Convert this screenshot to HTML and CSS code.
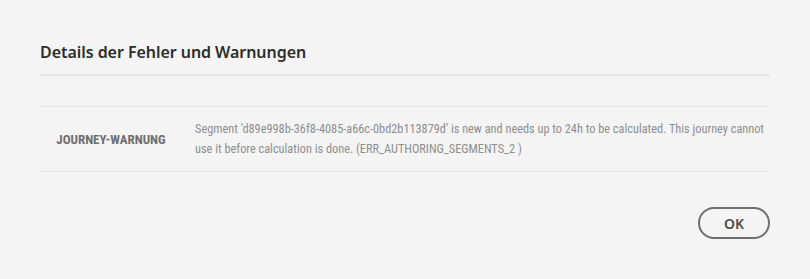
FILE: index.html
```html
<!DOCTYPE html>
<html>
<head>
    <title>Details der Fehler und Warnungen</title>
    <link rel="stylesheet" href="styles.css">
</head>
<body>

<div class="dialog">
    <h1>Details der Fehler und Warnungen</h1>

    <table class="issues">
        <thead>
            <tr><th></th><th></th></tr>
        </thead>
        <tbody>
            <tr>
                <td class="type">JOURNEY-WARNUNG</td>
                <td class="message">Segment 'd89e998b-36f8-4085-a66c-0bd2b113879d' is new and needs up to 24h to be calculated. This journey cannot use it before calculation is done. (ERR_AUTHORING_SEGMENTS_2 )</td>
            </tr>
        </tbody>
    </table>

    <div class="footer">
        <button class="btn">OK</button>
    </div>
</div>

</body>
</html>
```

FILE: styles.css
```css
body, html {
    margin: 0;
    padding: 0;
    background-color: #f4f4f4;
    font-family: "Noto Sans", sans-serif;
}

.dialog {
    padding: 39px 40px 0 40px;
}

h1 {
    margin: 0;
    font-size: 16px;
    font-weight: 600;
    letter-spacing: -0.05px;
    color: #2c2c2c;
    line-height: 26px;
    padding-bottom: 9px;
    border-bottom: 2px solid #e6e6e6;
}

table.issues {
    width: 100%;
    border-collapse: collapse;
}

table.issues th {
    height: 30px;
    padding: 0;
    border-bottom: 1px solid #e4e4e4;
}

table.issues td {
    height: 64px;
    padding-top: 0;
    padding-bottom: 0;
    border-bottom: 1px solid #e4e4e4;
    vertical-align: middle;
}

td.type {
    width: 140px;
    text-align: center;
    font-family: Roboto, sans-serif;
    font-size: 13px;
    font-weight: bold;
    font-stretch: condensed;
    color: #6e6e6e;
}

td.message {
    padding-left: 13px;
    padding-right: 2px;
    font-family: Roboto, sans-serif;
    font-size: 12.3px;
    font-stretch: condensed;
    line-height: 20px;
    color: #8e8e8e;
}

.footer {
    display: flex;
    justify-content: flex-end;
    padding-top: 35px;
}

.btn {
    font-family: "Noto Sans", sans-serif;
    font-size: 14px;
    font-weight: 600;
    color: #4b4b4b;
    background-color: transparent;
    border: 2px solid #6e6e6e;
    border-radius: 16px;
    width: 72px;
    height: 32px;
    padding: 0;
    cursor: pointer;
}
```
